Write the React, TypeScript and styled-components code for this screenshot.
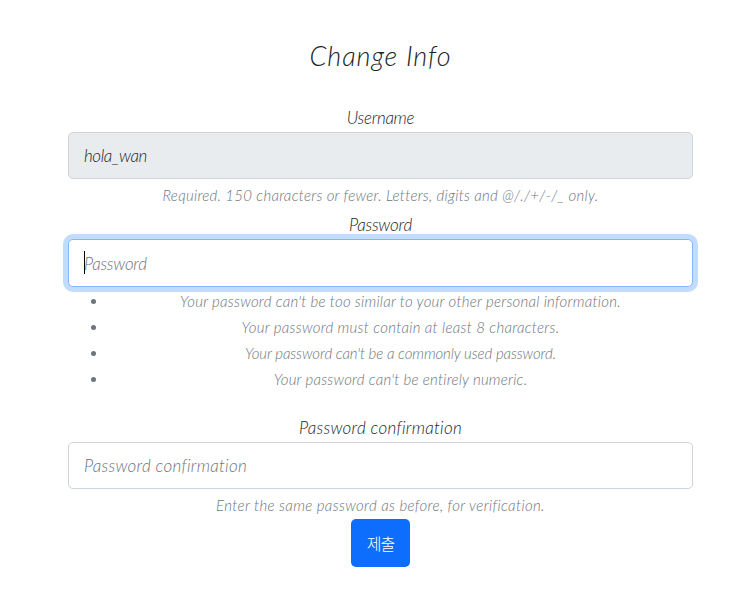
import React from 'react';
import styled, { createGlobalStyle, css } from 'styled-components';

const GlobalStyle = createGlobalStyle`
  * { box-sizing: border-box; }
  body {
    margin: 0;
    background: #fff;
    color: #212529;
    font-family: Lato, "Noto Sans CJK KR", sans-serif;
    font-style: italic;
    font-weight: 300;
  }
`;

const Page = styled.main`
  width: 625px;
  margin-left: 68px;
  padding-top: 36px;
  display: flex;
  flex-direction: column;
  text-align: center;
  white-space: nowrap;
`;

const Title = styled.h1<{ $tracking: number }>`
  margin: 0 0 27px;
  padding-bottom: 2px;
  font-size: 27px;
  line-height: 40px;
  font-weight: 300;
  letter-spacing: ${(p) => p.$tracking}px;
`;

const Field = styled.div<{ $gap: number }>`
  display: flex;
  flex-direction: column;
  margin-bottom: ${(p) => p.$gap}px;
`;

const Label = styled.label<{ $tracking: number }>`
  padding-bottom: 2px;
  font-size: 17px;
  line-height: 25px;
  letter-spacing: ${(p) => p.$tracking}px;
`;

const Control = styled.div`
  position: relative;
  display: flex;
`;

const Input = styled.input<{ $tracking: number; $height: number; $focused?: boolean }>`
  width: 100%;
  height: ${(p) => p.$height}px;
  padding: 0 15px;
  border: 1px solid #ced4da;
  border-radius: 5px;
  outline: none;
  background: #fff;
  color: #212529;
  font: inherit;
  font-size: 17px;
  letter-spacing: ${(p) => p.$tracking}px;
  &::placeholder { color: #6c757d; opacity: 1; }
  &:disabled { background: #e9ecef; opacity: 1; }
  ${(p) => p.$focused && css`
    border-color: #86b7fe;
    box-shadow: 0 0 0 5px rgba(13, 110, 253, 0.25);
  `}
`;

const Caret = styled.span`
  position: absolute;
  left: 16px;
  top: 12px;
  width: 1px;
  height: 23px;
  background: #000;
`;

const Hint = styled.small<{ $tracking: number }>`
  margin-top: 3px;
  padding-bottom: 1px;
  color: #6c757d;
  font-size: 15px;
  line-height: 26px;
  letter-spacing: ${(p) => p.$tracking}px;
`;

const Rules = styled.ul`
  margin: 1px 0 0;
  padding: 0 0 0 40px;
  list-style: none;
  color: #6c757d;
  font-size: 15px;
  line-height: 26px;
`;

const Rule = styled.li<{ $tracking: number }>`
  position: relative;
  letter-spacing: ${(p) => p.$tracking}px;
  &::before {
    content: "";
    position: absolute;
    left: -17px;
    top: 11px;
    width: 5px;
    height: 5px;
    border-radius: 50%;
    background: #6c757d;
  }
`;

const Submit = styled.button`
  align-self: center;
  width: 59px;
  height: 48px;
  padding: 0;
  border: 0;
  border-radius: 5px;
  background: #0d6efd;
  color: #fff;
  font-family: "Noto Sans CJK KR", sans-serif;
  font-size: 16px;
  font-style: normal;
  font-weight: 300;
  letter-spacing: -1px;
`;

const rules = [
  { text: "Your password can't be too similar to your other personal information.", tracking: 0.26 },
  { text: 'Your password must contain at least 8 characters.', tracking: 0.29 },
  { text: "Your password can't be a commonly used password.", tracking: -0.08 },
  { text: "Your password can't be entirely numeric.", tracking: 0.23 },
];

export default function App() {
  return (
    <>
      <GlobalStyle />
      <Page>
        <Title $tracking={0.95}>Change Info</Title>
        <Field $gap={3}>
          <Label htmlFor="username" $tracking={-0.3}>Username</Label>
          <Input id="username" defaultValue="hola_wan" disabled $height={47} $tracking={-0.4} />
          <Hint $tracking={0.28}>Required. 150 characters or fewer. Letters, digits and @/./+/-/_ only.</Hint>
        </Field>
        <Field $gap={23}>
          <Label htmlFor="password" $tracking={-0.2}>Password</Label>
          <Control>
            <Input id="password" type="password" placeholder="Password" $height={48} $tracking={-0.25} $focused />
            <Caret />
          </Control>
          <Rules>
            {rules.map((rule) => (
              <Rule key={rule.text} $tracking={rule.tracking}>{rule.text}</Rule>
            ))}
          </Rules>
        </Field>
        <Field $gap={0}>
          <Label htmlFor="confirmation" $tracking={0.28}>Password confirmation</Label>
          <Input id="confirmation" type="password" placeholder="Password confirmation" $height={47} $tracking={0.28} />
          <Hint $tracking={0.36}>Enter the same password as before, for verification.</Hint>
        </Field>
        <Submit type="submit">제출</Submit>
      </Page>
    </>
  );
}
